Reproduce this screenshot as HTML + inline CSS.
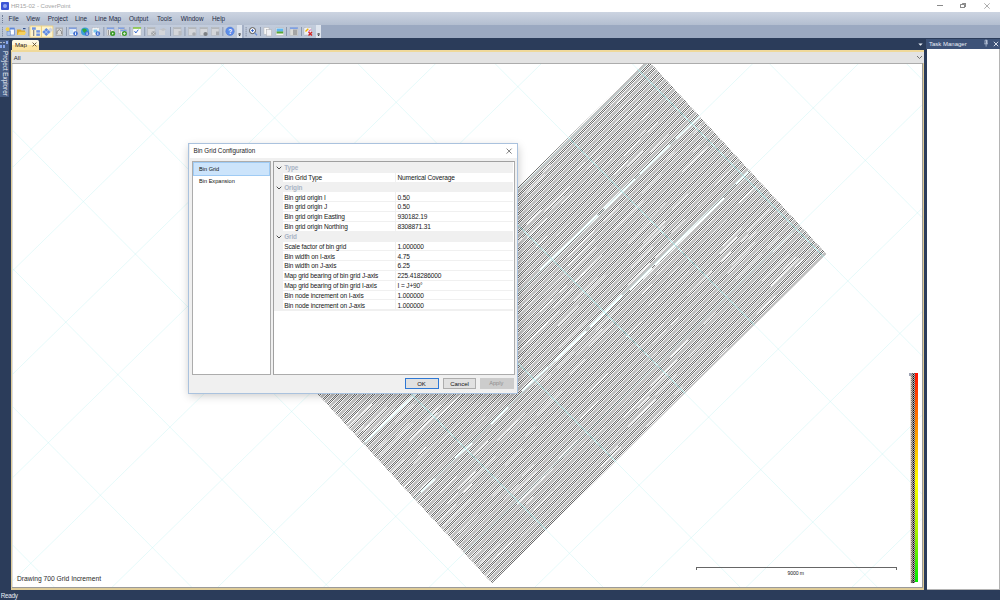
<!DOCTYPE html>
<html><head><meta charset="utf-8">
<style>
*{margin:0;padding:0;box-sizing:border-box}
html,body{width:1000px;height:600px;overflow:hidden;background:#2b3c5a;font-family:"Liberation Sans",sans-serif;position:relative}
.a{position:absolute}
.t{position:absolute;white-space:nowrap;line-height:1}
.tk{-webkit-text-stroke:0.15px currentColor}
</style></head><body>
<div class="a" style="left:0;top:0;width:1000px;height:12px;background:#fff"></div>
<div class="a" style="left:1px;top:2px;width:7.5px;height:7.5px;background:#3c55d6;border-radius:1px"></div>
<div class="a" style="left:2.5px;top:3.5px;width:4.5px;height:4.5px;background:#97a8ee;border-radius:50%"></div>
<div class="t" style="left:11px;top:2.6px;font-size:6.05px;color:#a4a4a4;">HR15-02 - CoverPoint</div>
<div class="a" style="left:937px;top:5px;width:5.5px;height:0.7px;background:#8a8a8a"></div>
<div class="a" style="left:960.3px;top:4px;width:4.6px;height:4.4px;border:0.7px solid #8a8a8a;border-radius:0.6px"></div>
<div class="a" style="left:961.6px;top:2.9px;width:4.6px;height:4.4px;border-top:0.7px solid #8a8a8a;border-right:0.7px solid #8a8a8a;border-radius:0.6px"></div>
<svg class="a" style="left:983px;top:2px" width="8" height="8"><path d="M1.3 1.3L6.7 6.7M6.7 1.3L1.3 6.7" stroke="#8a8a8a" stroke-width="0.7"/></svg>
<div class="a" style="left:0;top:12px;width:1000px;height:13px;background:linear-gradient(#ccd4e1,#b3bed0)"></div>
<div class="a" style="left:2px;top:15px;width:1px;height:8px;border-left:1px dotted #6f7c95"></div>
<div class="t" style="left:8.6px;top:15.6px;font-size:6.4px;color:#1f2b45;width:9.4px">File</div>
<div class="t" style="left:26.2px;top:15.6px;font-size:6.4px;color:#1f2b45;width:12.8px">View</div>
<div class="t" style="left:47.8px;top:15.6px;font-size:6.4px;color:#1f2b45;width:18.8px">Project</div>
<div class="t" style="left:75px;top:15.6px;font-size:6.4px;color:#1f2b45;width:11.7px">Line</div>
<div class="t" style="left:94.8px;top:15.6px;font-size:6.4px;color:#1f2b45;width:25.4px">Line Map</div>
<div class="t" style="left:129px;top:15.6px;font-size:6.4px;color:#1f2b45;width:19.7px">Output</div>
<div class="t" style="left:157px;top:15.6px;font-size:6.4px;color:#1f2b45;width:14.2px">Tools</div>
<div class="t" style="left:180.8px;top:15.6px;font-size:6.4px;color:#1f2b45;width:22.6px">Window</div>
<div class="t" style="left:212px;top:15.6px;font-size:6.4px;color:#1f2b45;width:12.6px">Help</div>
<div class="a" style="left:0;top:25px;width:1000px;height:13px;background:#9ba9c1"></div>
<div class="a" style="left:0;top:25px;width:242px;height:13px;background:linear-gradient(#c2ccdc,#b9c4d6)"></div>
<div class="a" style="left:237px;top:25px;width:5px;height:13px;background:#e3e8f0"></div>
<div class="a" style="left:244px;top:25px;width:77px;height:13px;background:linear-gradient(#c2ccdc,#b9c4d6)"></div>
<div class="a" style="left:316px;top:25px;width:5px;height:13px;background:#e3e8f0"></div>
<svg class="a" style="left:0;top:0" width="330" height="40" viewBox="0 0 330 40"><rect x="2" y="27.3" width="1" height="1" fill="#6f7c94" /><rect x="2" y="29.3" width="1" height="1" fill="#6f7c94" /><rect x="2" y="31.3" width="1" height="1" fill="#6f7c94" /><rect x="2" y="33.3" width="1" height="1" fill="#6f7c94" /><rect x="2" y="35.3" width="1" height="1" fill="#6f7c94" /><circle cx="7.6" cy="29.2" r="1.9" fill="#f2cd4a" /><rect x="10" y="28" width="4.3" height="7" fill="#fdfdff" stroke="#5b7fcf" stroke-width="0.7"/><rect x="10" y="28" width="4.3" height="1.5" fill="#5b86dc" /><rect x="7" y="31.3" width="3.2" height="4" fill="#a8c3f0" stroke="#6d87b8" stroke-width="0.5"/><path d="M17 29.5L20.5 29.5L21.5 30.5L25 30.5L25 35L17 35Z" fill="#d9a52e" stroke="none" stroke-width="1" /><path d="M17.5 35L19 31.8L26.3 31.8L24.8 35Z" fill="#f6d060" stroke="none" stroke-width="1" /><rect x="23" y="28" width="2.5" height="1.2" fill="#2f4f8a" /><rect x="28.4" y="27" width="0.9" height="9" fill="#8793a9" /><rect x="30" y="26" width="11.3" height="11.2" fill="#fdf3cc" stroke="#eccc78" stroke-width="0.8"/><rect x="41.6" y="26" width="11.3" height="11.2" fill="#fdf3cc" stroke="#eccc78" stroke-width="0.8"/><rect x="32" y="27.3" width="3.8" height="2.5" fill="#6e94e4" /><rect x="36.3" y="30.2" width="3.6" height="2.4" fill="#6e94e4" /><rect x="36.3" y="33.5" width="3.6" height="2.4" fill="#6e94e4" /><rect x="33" y="30" width="1.3" height="6" fill="#8c8c8c" /><path d="M50.5 27.5L53 30L49 34L46.5 31.5Z" fill="#d0d4dc" stroke="none" stroke-width="1" /><path d="M46.3 28L50.3 32L46.3 36L42.3 32Z" fill="#5f8ae0" stroke="none" stroke-width="1" /><path d="M44.3 30L48.3 34M48.3 30L44.3 34" fill="none" stroke="#dfe9fb" stroke-width="0.6" /><rect x="55.5" y="27.5" width="7.5" height="8.5" fill="#a9abae" /><rect x="56.8" y="28.8" width="5" height="6" fill="#dcdcdc" /><path d="M57 34L57 31.5L59.3 29.5L61.6 31.5L61.6 34" fill="none" stroke="#8a8a8a" stroke-width="1" /><rect x="66" y="27" width="0.9" height="9" fill="#8793a9" /><rect x="69" y="27.5" width="7.5" height="8" fill="#f4f7fc" stroke="#8e98a8" stroke-width="0.6"/><rect x="69" y="27.5" width="7.5" height="1.7" fill="#7f9ee0" /><rect x="70" y="30" width="3" height="4" fill="#c9e2f8" /><circle cx="75.5" cy="33.6" r="2.3" fill="#3f6fd1" /><rect x="75.1" y="32.4" width="0.9" height="2.6" fill="#fff" /><circle cx="85" cy="31.5" r="4" fill="#3aa0d8" /><path d="M82 29.5Q84 28 86 29L87 31L85 33L83.5 32Z" fill="#31a83b" stroke="none" stroke-width="1" /><circle cx="87" cy="33.6" r="2.3" fill="#3f6fd1" /><rect x="86.6" y="32.4" width="0.9" height="2.6" fill="#fff" /><rect x="92.2" y="27.8" width="7" height="7.5" fill="#fafafa" stroke="#a0a0a0" stroke-width="0.5" stroke-dasharray="1 0.6"/><rect x="93.5" y="29.5" width="3.8" height="3" fill="#7cc8ea" /><circle cx="97.8" cy="33.6" r="2.3" fill="#3f6fd1" /><rect x="97.39999999999999" y="32.4" width="0.9" height="2.6" fill="#fff" /><rect x="103.4" y="27" width="0.9" height="9" fill="#8793a9" /><rect x="107" y="27.5" width="7" height="8" fill="#e6e6e6" stroke="#a2a2a2" stroke-width="0.5"/><rect x="107" y="27.5" width="7" height="1.8" fill="#7da0e6" /><rect x="108" y="30" width="1" height="5" fill="#9a9a9a" /><rect x="110" y="30" width="1" height="5" fill="#9a9a9a" /><circle cx="112.7" cy="33.6" r="2.5" fill="#3c9b2a" /><path d="M112 32.4L113.8 33.6L112 34.8Z" fill="#e8f6e0" stroke="none" stroke-width="1" /><rect x="118.3" y="27.5" width="6" height="6" fill="#e8e8e8" stroke="#a2a2a2" stroke-width="0.5"/><rect x="118.3" y="27.5" width="6" height="1.6" fill="#7da0e6" /><rect x="120.5" y="29.8" width="6" height="6" fill="#eeeeee" stroke="#a2a2a2" stroke-width="0.5"/><rect x="120.5" y="29.8" width="6" height="1.6" fill="#7da0e6" /><circle cx="124.4" cy="33.6" r="2.5" fill="#3c9b2a" /><path d="M123 33.6L125.8 33.6M124.4 32.2L124.4 35" fill="none" stroke="#eaf6e4" stroke-width="0.8" /><rect x="129.4" y="27" width="0.9" height="9" fill="#8793a9" /><rect x="133" y="27.5" width="8" height="8" fill="#fbfbfb" stroke="#b8b8b8" stroke-width="0.5"/><rect x="133" y="27.2" width="8" height="1.6" fill="#86c440" /><path d="M134.5 31L135.8 33L138.3 29.7" fill="none" stroke="#3b6fd0" stroke-width="1" /><rect x="144.3" y="27" width="0.9" height="9" fill="#8793a9" /><rect x="147.5" y="27.5" width="7.5" height="7.8" fill="#d4d6da" stroke="#b0b3b8" stroke-width="0.5"/><rect x="147.5" y="27.5" width="7.5" height="1.5" fill="#b4b7bc" /><circle cx="153.5" cy="33.5" r="2.3" fill="#9fa2a6" /><path d="M152.3 32.3L154.7 34.7M154.7 32.3L152.3 34.7" fill="none" stroke="#e2e2e2" stroke-width="0.6" /><rect x="159" y="30" width="6" height="5" fill="#d3d5d9" /><path d="M160 29.5L163.5 28L166.5 29.5L163 31Z" fill="#bfc2c6" stroke="none" stroke-width="1" /><rect x="170" y="27" width="0.9" height="9" fill="#8793a9" /><rect x="173.5" y="27.5" width="7.5" height="7.8" fill="#d4d6da" stroke="#b0b3b8" stroke-width="0.5"/><rect x="173.5" y="27.5" width="7.5" height="1.5" fill="#b4b7bc" /><rect x="178.5" y="31" width="3" height="4" fill="#b8babe" /><rect x="184.5" y="27" width="0.9" height="9" fill="#8793a9" /><rect x="188.5" y="27.5" width="7.5" height="7.8" fill="#d4d6da" stroke="#b0b3b8" stroke-width="0.5"/><rect x="188.5" y="27.5" width="7.5" height="1.5" fill="#b4b7bc" /><circle cx="194" cy="34" r="1.8" fill="#a8abb0" /><rect x="200" y="27.5" width="7.5" height="7.8" fill="#d4d6da" stroke="#b0b3b8" stroke-width="0.5"/><rect x="200" y="27.5" width="7.5" height="1.5" fill="#b4b7bc" /><circle cx="205.5" cy="34" r="2.1" fill="#7d8084" /><rect x="211.5" y="27.5" width="7.5" height="7.8" fill="#d4d6da" stroke="#b0b3b8" stroke-width="0.5"/><rect x="211.5" y="27.5" width="7.5" height="1.5" fill="#b4b7bc" /><rect x="216" y="31.5" width="3" height="3.5" fill="#a8abb0" /><rect x="222.4" y="27" width="0.9" height="9" fill="#8793a9" /><circle cx="230" cy="31.3" r="4.2" fill="#5d8ce8" stroke="#4a77d0" stroke-width="0.5"/><text x="228.2" y="34" font-size="6.5" font-weight="bold" fill="#fff" font-family="Liberation Sans">?</text><rect x="237" y="25" width="5" height="12.8" fill="#dfe5ee" /><rect x="238.5" y="33.2" width="2.2" height="0.6" fill="#222" /><path d="M238.2 34.5L241 34.5L239.6 36Z" fill="#111" stroke="none" stroke-width="1" /><rect x="242" y="25" width="2" height="12.8" fill="#a4b0c6" /><rect x="245.6" y="27.3" width="1" height="1" fill="#6f7c94" /><rect x="245.6" y="29.3" width="1" height="1" fill="#6f7c94" /><rect x="245.6" y="31.3" width="1" height="1" fill="#6f7c94" /><rect x="245.6" y="33.3" width="1" height="1" fill="#6f7c94" /><rect x="245.6" y="35.3" width="1" height="1" fill="#6f7c94" /><circle cx="252.5" cy="30.6" r="3" fill="#fff" stroke="#505050" stroke-width="1"/><path d="M251 30.6L254 30.6M252.5 29.1L252.5 32.1" fill="none" stroke="#2c5cc8" stroke-width="0.9" /><path d="M254.6 32.8L257 35.2" fill="none" stroke="#6b8fd8" stroke-width="1.3" /><rect x="260" y="27" width="0.9" height="9" fill="#8793a9" /><rect x="264" y="27.7" width="5" height="6.5" fill="#f8f8f8" stroke="#b8b8b8" stroke-width="0.5"/><rect x="266.3" y="29.5" width="5.4" height="6.5" fill="#f0f0f4" stroke="#a8a8a8" stroke-width="0.5"/><rect x="276" y="27.8" width="7.8" height="7.5" fill="#f4f4f4" stroke="#b5b5b5" stroke-width="0.5"/><rect x="276.6" y="28.5" width="6.6" height="3.2" fill="#5cb4ef" /><rect x="276.6" y="31.5" width="6.6" height="2" fill="#58a632" /><rect x="286" y="27" width="0.9" height="9" fill="#8793a9" /><rect x="290" y="27.5" width="7.8" height="8" fill="#dcdcd8" stroke="#b5b5b5" stroke-width="0.5"/><rect x="290" y="27.3" width="7.8" height="1.8" fill="#7da0e6" /><rect x="293" y="29.5" width="4" height="5.5" fill="#a5a5a5" /><rect x="301" y="27" width="0.9" height="9" fill="#8793a9" /><rect x="304" y="27.5" width="7.5" height="7.5" fill="#eef0f4" stroke="#8a8a8a" stroke-width="0.4" stroke-dasharray="0.8 0.5"/><path d="M305 31L307.8 28.2L308.8 29.2L306 32Z" fill="#f0b400" stroke="none" stroke-width="1" /><path d="M308.3 31.3L310.3 29.3L311 30L309 32Z" fill="#e050c0" stroke="none" stroke-width="1" /><path d="M308.5 32L312 35.5M312 32L308.5 35.5" fill="none" stroke="#d42020" stroke-width="1.3" /><rect x="316" y="25" width="5" height="12.8" fill="#dfe5ee" /><rect x="317.5" y="33.2" width="2.2" height="0.6" fill="#222" /><path d="M317.2 34.5L320 34.5L318.6 36Z" fill="#111" stroke="none" stroke-width="1" /></svg>
<div class="a" style="left:0;top:39.5px;width:8.5px;height:57px;background:#455b83"></div>
<div class="t" style="left:1.2px;top:50.5px;font-size:6.3px;color:#f2f5fa;transform-origin:0 0;transform:translateX(6.6px) rotate(90deg)">Project Explorer</div>
<div class="a" style="left:0.3px;top:41.5px;width:2px;height:1.6px;background:#aeb4bf"></div><div class="a" style="left:2.8px;top:41.5px;width:2px;height:1.6px;background:#aeb4bf"></div><div class="a" style="left:6px;top:40.6px;width:1.8px;height:3.6px;background:#86a6ee"></div>
<div class="a" style="left:0.3px;top:45px;width:2px;height:2.6px;background:#86a6ee"></div><div class="a" style="left:3px;top:45px;width:2px;height:2.6px;background:#86a6ee"></div>
<div class="a" style="left:11.5px;top:39.5px;width:27.5px;height:11px;background:linear-gradient(#fffbe9 0%,#fff6d8 45%,#fde6a4 50%,#fde4a0 100%);border-radius:1.5px 1.5px 0 0"></div>
<div class="t" style="left:14.9px;top:41.9px;font-size:6.2px;color:#2b2222;">Map</div>
<svg class="a" style="left:31.5px;top:42px" width="5" height="5"><path d="M0.6 0.6L4.4 4.4M4.4 0.6L0.6 4.4" stroke="#5c4e34" stroke-width="0.9"/></svg>
<div class="a" style="left:11px;top:50px;width:913px;height:540px;background:#dfcc98"></div>
<div class="a" style="left:11px;top:50px;width:913px;height:2px;background:#efd99b"></div>
<div class="a" style="left:12px;top:52px;width:911.5px;height:11px;background:#e3e3e3"></div>
<div class="t" style="left:13.8px;top:55.2px;font-size:6.0px;color:#1b1b1b;">All</div>
<svg class="a" style="left:915.5px;top:55.2px" width="7" height="5"><path d="M1 1L3.5 3.5L6 1" fill="none" stroke="#555" stroke-width="0.8"/></svg>
<div class="a" style="left:12px;top:63px;width:911px;height:1px;background:#acacac"></div>
<div class="a" style="left:12px;top:64px;width:910px;height:523px;background:#fff;border-left:1px solid #dedede"></div>
<div class="a" style="left:922px;top:63px;width:1px;height:525px;background:#9a9a9a"></div>
<div class="a" style="left:12px;top:587px;width:911px;height:1px;background:#9a9a9a"></div>
<svg class="a" style="left:917.8px;top:42.8px" width="6" height="4"><path d="M0.3 0.4L4.7 0.4L2.5 2.8Z" fill="#e8edf5"/></svg>
<svg class="a" style="left:0;top:0" width="1000" height="600" viewBox="0 0 1000 600">
<defs><clipPath id="mc"><rect x="12" y="64" width="910" height="523"/></clipPath>
<clipPath id="hc"><polygon points="647.5,59.5 826.7,254.0 492.0,583.5 312.8,389.0"/></clipPath>
<pattern id="ck" width="9" height="9" patternUnits="userSpaceOnUse"><rect width="9" height="9" fill="#c0c0c0"/><rect x="0" y="0" width="1" height="1" fill="#ffffff"/><rect x="0" y="1" width="1" height="1" fill="#6e6e6e"/><rect x="0" y="2" width="1" height="1" fill="#f0f0f0"/><rect x="0" y="3" width="1" height="1" fill="#6e6e6e"/><rect x="0" y="4" width="1" height="1" fill="#ffffff"/><rect x="1" y="0" width="1" height="1" fill="#6e6e6e"/><rect x="1" y="1" width="1" height="1" fill="#f0f0f0"/><rect x="1" y="2" width="1" height="1" fill="#6e6e6e"/><rect x="1" y="3" width="1" height="1" fill="#ffffff"/><rect x="1" y="8" width="1" height="1" fill="#ffffff"/><rect x="2" y="0" width="1" height="1" fill="#f0f0f0"/><rect x="2" y="1" width="1" height="1" fill="#6e6e6e"/><rect x="2" y="2" width="1" height="1" fill="#ffffff"/><rect x="2" y="7" width="1" height="1" fill="#ffffff"/><rect x="2" y="8" width="1" height="1" fill="#6e6e6e"/><rect x="3" y="0" width="1" height="1" fill="#6e6e6e"/><rect x="3" y="1" width="1" height="1" fill="#ffffff"/><rect x="3" y="6" width="1" height="1" fill="#ffffff"/><rect x="3" y="7" width="1" height="1" fill="#6e6e6e"/><rect x="3" y="8" width="1" height="1" fill="#f0f0f0"/><rect x="4" y="0" width="1" height="1" fill="#ffffff"/><rect x="4" y="5" width="1" height="1" fill="#ffffff"/><rect x="4" y="6" width="1" height="1" fill="#6e6e6e"/><rect x="4" y="7" width="1" height="1" fill="#f0f0f0"/><rect x="4" y="8" width="1" height="1" fill="#6e6e6e"/><rect x="5" y="4" width="1" height="1" fill="#ffffff"/><rect x="5" y="5" width="1" height="1" fill="#6e6e6e"/><rect x="5" y="6" width="1" height="1" fill="#f0f0f0"/><rect x="5" y="7" width="1" height="1" fill="#6e6e6e"/><rect x="5" y="8" width="1" height="1" fill="#ffffff"/><rect x="6" y="3" width="1" height="1" fill="#ffffff"/><rect x="6" y="4" width="1" height="1" fill="#6e6e6e"/><rect x="6" y="5" width="1" height="1" fill="#f0f0f0"/><rect x="6" y="6" width="1" height="1" fill="#6e6e6e"/><rect x="6" y="7" width="1" height="1" fill="#ffffff"/><rect x="7" y="2" width="1" height="1" fill="#ffffff"/><rect x="7" y="3" width="1" height="1" fill="#6e6e6e"/><rect x="7" y="4" width="1" height="1" fill="#f0f0f0"/><rect x="7" y="5" width="1" height="1" fill="#6e6e6e"/><rect x="7" y="6" width="1" height="1" fill="#ffffff"/><rect x="8" y="1" width="1" height="1" fill="#ffffff"/><rect x="8" y="2" width="1" height="1" fill="#6e6e6e"/><rect x="8" y="3" width="1" height="1" fill="#f0f0f0"/><rect x="8" y="4" width="1" height="1" fill="#6e6e6e"/><rect x="8" y="5" width="1" height="1" fill="#ffffff"/></pattern></defs>
<g clip-path="url(#mc)">
<g clip-path="url(#hc)">
<polygon points="647.5,59.5 826.7,254.0 492.0,583.5 312.8,389.0" fill="url(#ck)"/>
<path d="M365 442L413 396M410 399L517 290M540 270L598 215M604 209L635 179M640 174L670 145M676 139L702 114M421 492L435 479M455 458L472 443M491 424L508 407M522 391L548 367M555 361L586 331M590 327L622 295M630 290L652 268M655 265L724 198M736 184L748 172" stroke="#f8ffff" stroke-width="2.3" fill="none"/>
<path d="M359.9 347.2L334.7 372.0M388.2 319.3L372.2 335.1M363.5 343.6L353.5 353.5M380.6 326.8L364.1 343.1M386.5 325.6L378.7 333.3M550.4 164.3L542.6 171.9M380.9 331.1L359.4 352.3M637.9 78.1L609.8 105.8M329.0 382.2L317.2 393.8M436.6 280.9L416.6 300.5M375.8 340.7L368.6 347.8M642.2 78.5L616.4 103.8M453.4 264.3L430.0 287.4M544.9 174.2L525.7 193.1M482.6 240.2L462.3 260.1M489.1 233.8L468.3 254.3M439.4 287.3L424.4 302.0M474.1 253.1L447.1 279.7M630.7 98.9L619.2 110.2M404.9 321.3L387.5 338.4M637.3 97.0L614.1 119.9M626.9 111.8L614.6 124.0M640.6 98.3L634.5 104.3M433.8 302.0L423.2 312.4M352.7 381.8L345.8 388.6M337.1 401.7L330.5 408.2M640.8 102.8L620.7 122.5M404.6 335.2L392.8 346.9M636.0 107.4L622.7 120.5M413.7 330.9L405.3 339.1M584.9 162.3L576.9 170.2M647.4 100.8L623.5 124.4M607.9 139.7L589.5 157.8M499.3 251.2L471.1 278.9M412.1 337.1L396.8 352.1M541.2 210.0L526.5 224.4M338.3 409.7L334.9 413.0M570.0 186.1L544.2 211.6M601.3 155.3L586.6 169.8M385.9 367.4L365.5 387.5M638.3 119.0L610.0 146.8M600.5 156.2L588.9 167.6M563.9 196.7L551.5 209.0M649.5 112.5L641.7 120.1M479.0 280.3L467.8 291.4M472.8 286.4L458.6 300.4M522.4 237.6L494.8 264.8M397.7 365.0L388.9 373.6M547.0 217.9L527.0 237.6M572.2 193.1L561.3 203.9M471.9 291.9L449.7 313.8M431.0 336.8L403.8 363.5M612.7 157.9L585.3 184.8M478.7 294.4L463.4 309.5M645.9 129.7L639.3 136.2M358.5 412.7L347.3 423.7M444.9 327.7L433.3 339.1M518.6 259.7L501.0 277.0M371.9 404.1L348.2 427.4M640.6 139.6L624.0 155.9M464.2 313.3L444.4 332.7M658.1 122.3L647.5 132.7M434.4 347.1L427.1 354.3M547.4 235.9L536.0 247.1M628.3 160.8L614.2 174.7M363.8 425.7L356.0 433.4M643.2 150.7L627.2 166.5M578.8 214.2L556.3 236.2M514.8 277.1L487.5 304.0M492.1 299.5L465.3 325.8M387.1 407.4L365.4 428.8M369.5 424.8L363.3 430.8M478.8 317.1L462.1 333.6M447.2 348.2L434.3 361.0M668.8 134.7L650.6 152.6M394.9 408.9L372.4 431.1M432.9 376.1L406.3 402.3M580.6 230.7L559.3 251.7M409.0 404.2L393.8 419.1M413.8 404.0L395.0 422.5M483.4 340.1L469.0 354.3M700.9 126.0L693.5 133.3M674.7 151.8L666.3 160.0M618.9 206.7L603.7 221.6M594.5 230.7L567.5 257.3M554.0 275.2L537.8 291.2M526.1 302.7L508.5 319.9M535.0 293.9L522.2 306.4M677.9 153.2L671.7 159.4M386.8 439.8L378.5 447.9M488.5 344.2L471.7 360.8M409.4 422.1L395.3 436.0M661.5 173.9L641.9 193.3M535.9 297.5L513.0 320.1M594.8 239.6L567.9 266.1M413.2 423.0L400.0 435.9M488.8 348.5L478.6 358.6M567.4 271.1L543.4 294.8M405.7 430.4L379.9 455.7M640.4 203.9L613.7 230.2M643.6 200.7L634.9 209.3M596.5 247.1L570.4 272.8M700.3 144.9L693.1 152.0M441.0 404.7L432.7 412.9M558.3 289.2L531.5 315.6M438.0 407.7L423.6 421.9M553.0 299.1L540.1 311.8M437.4 412.8L409.3 440.5M566.9 285.4L559.4 292.7M707.8 146.7L682.2 171.9M704.4 150.0L682.5 171.5M602.0 255.5L581.4 275.6M531.7 324.6L511.4 344.6M584.9 272.3L574.9 282.1M463.1 392.2L451.3 403.8M459.7 395.5L435.8 419.0M573.3 288.3L553.2 308.0M404.1 459.4L390.2 473.0M658.2 209.2L641.7 225.5M665.1 202.4L659.2 208.3M548.1 322.2L541.6 328.6M651.3 220.6L627.9 243.7M546.5 323.8L519.2 350.6M559.7 310.8L531.2 338.8M597.6 278.0L573.9 301.4M426.0 447.0L418.3 454.5M688.1 193.6L672.0 209.3M522.2 356.9L495.7 382.9M605.5 274.9L586.8 293.3M437.3 440.5L413.4 464.0M578.6 305.9L558.0 326.2M665.2 220.7L643.0 242.5M459.9 422.8L439.5 442.8M664.6 225.8L638.4 251.6M411.1 480.0L403.5 487.5M652.8 246.6L630.7 268.4M735.2 165.5L718.0 182.5M728.0 172.6L714.5 185.9M485.5 415.9L468.7 432.4M733.1 172.1L709.0 195.9M721.2 183.9L697.3 207.4M684.8 219.7L671.4 232.9M587.3 320.2L558.8 348.3M443.4 461.9L425.9 479.1M430.5 479.2L413.6 495.8M429.4 480.3L421.7 487.8M672.9 240.5L655.2 257.9M649.9 263.2L627.6 285.1M574.3 342.2L549.4 366.8M561.8 354.5L549.0 367.1M431.9 487.0L416.8 501.9M547.5 373.2L534.9 385.6M704.2 218.9L686.1 236.7M660.1 262.3L643.1 279.1M574.3 351.3L557.2 368.2M551.1 374.2L544.8 380.4M429.2 494.2L419.0 504.3M619.6 306.8L595.6 330.3M715.1 217.3L707.3 225.0M700.1 232.1L673.2 258.6M602.3 328.4L575.6 354.7M488.0 440.9L473.1 455.6M673.5 258.3L656.5 275.0M613.0 322.5L588.7 346.4M456.7 476.3L440.1 492.6M651.9 284.1L641.9 294.0M750.5 191.7L738.8 203.1M525.3 413.3L497.3 440.9M748.4 193.7L739.2 202.8M756.4 185.9L744.2 197.9M518.1 420.4L506.9 431.5M727.4 218.9L705.1 240.9M721.4 224.8L704.1 241.9M678.7 266.9L668.5 277.0M585.0 359.1L569.4 374.5M552.9 395.3L528.4 419.5M558.6 389.7L540.7 407.4M475.6 471.4L457.7 489.0M691.7 258.7L681.0 269.2M562.2 390.7L537.0 415.6M689.1 265.8L666.5 288.1M495.7 456.2L469.4 482.1M661.2 293.2L648.4 305.9M458.1 493.2L447.4 503.7M472.1 484.0L463.4 492.6M689.1 270.4L666.8 292.4M641.6 321.8L625.9 337.2M456.4 504.1L438.3 521.9M535.5 426.2L525.2 436.3M741.5 228.0L722.8 246.4M470.8 499.1L443.0 526.4M737.2 236.8L720.0 253.8M522.1 448.6L504.9 465.5M509.3 465.7L492.6 482.1M769.9 209.2L746.8 231.9M607.9 373.2L589.3 391.6M731.2 251.9L721.3 261.6M712.0 270.8L687.1 295.2M448.8 529.9L445.5 533.1M748.4 235.0L741.2 242.0M756.5 231.5L748.6 239.3M651.6 334.8L636.2 350.0M663.8 322.8L653.3 333.1M657.6 328.9L637.4 348.8M502.1 486.6L492.3 496.2M666.5 329.3L652.4 343.2M478.3 514.5L458.8 533.7M755.1 242.0L731.4 265.4M678.5 317.4L670.9 325.0M598.4 400.9L588.4 410.8M593.4 405.8L579.9 419.1M533.9 464.4L521.8 476.3M750.2 251.5L727.5 273.8M518.6 484.0L503.7 498.7M491.2 511.0L465.5 536.4M536.7 470.8L513.6 493.6M657.7 351.7L635.5 373.5M769.9 241.2L756.4 254.5M762.0 253.6L736.0 279.2M464.2 546.8L461.0 549.9M779.1 236.7L767.2 248.5M473.9 537.2L461.4 549.5M577.1 440.2L558.4 458.6M619.5 398.4L604.9 412.8M585.2 436.8L563.5 458.2M545.2 476.2L517.1 503.8M792.5 232.7L772.8 252.1M552.9 468.6L541.3 480.0M633.4 393.9L610.4 416.6M585.5 441.1L579.5 447.0M715.8 312.8L703.8 324.6M688.3 339.9L670.3 357.6M480.9 548.7L469.9 559.5M471.5 557.9L469.9 559.5M533.6 496.7L526.2 504.1M604.6 426.9L581.6 449.5M677.5 359.7L650.3 386.4M651.1 390.2L641.5 399.6M643.2 398.1L623.5 417.4M789.4 254.1L762.1 280.9M668.2 373.4L650.5 390.8M706.7 340.1L688.9 357.6M649.5 396.4L637.6 408.1M500.1 543.5L479.3 564.0M560.9 483.6L554.6 489.8M552.7 491.7L533.6 510.5M676.6 374.3L655.3 395.3M795.8 257.0L782.9 269.7M798.9 258.5L770.6 286.3M499.5 553.2L492.2 560.5M512.6 540.4L497.1 555.6M655.8 399.4L627.9 426.8M802.6 259.4L794.7 267.2M546.7 511.3L520.2 537.4M492.5 569.3L485.4 576.3M618.0 445.7L609.7 453.9M682.7 386.7L674.3 394.9M534.1 532.9L520.2 546.6M770.5 300.2L756.5 313.9M775.5 295.3L760.3 310.2M621.1 447.2L600.8 467.2M702.7 371.5L680.0 393.9M551.7 520.2L542.8 528.9M727.4 347.2L718.7 355.7M663.5 410.1L646.3 427.0" stroke="#ffffff" stroke-width="1.0" fill="none" opacity="0.9"/>
</g>
<path d="M-133.5 0L-746.6 600M-27.8 0L-640.9 600M77.9 0L-535.2 600M183.6 0L-429.5 600M289.3 0L-323.8 600M395.0 0L-218.1 600M500.7 0L-112.4 600M606.4 0L-6.7 600M712.1 0L99.0 600M817.8 0L204.7 600M923.5 0L310.4 600M1029.2 0L416.1 600M1134.9 0L521.8 600M1240.6 0L627.5 600M1346.3 0L733.2 600M1452.0 0L838.9 600M1557.7 0L944.6 600M1663.4 0L1050.3 600M1769.1 0L1156.0 600M-802.5 0L-207.1 600M-665.3 0L-69.9 600M-528.2 0L67.2 600M-391.0 0L204.4 600M-253.9 0L341.5 600M-116.7 0L478.7 600M20.4 0L615.8 600M157.6 0L753.0 600M294.7 0L890.1 600M431.9 0L1027.3 600M569.0 0L1164.4 600M706.2 0L1301.6 600M843.3 0L1438.7 600M980.5 0L1575.9 600" stroke="#bcf3f3" stroke-width="0.7" fill="none" opacity="0.55"/>
<g clip-path="url(#hc)"><path d="M-802.5 0L-207.1 600M-665.3 0L-69.9 600M-528.2 0L67.2 600M-391.0 0L204.4 600M-253.9 0L341.5 600M-116.7 0L478.7 600M20.4 0L615.8 600M157.6 0L753.0 600M294.7 0L890.1 600M431.9 0L1027.3 600M569.0 0L1164.4 600M706.2 0L1301.6 600M843.3 0L1438.7 600M980.5 0L1575.9 600" stroke="#a8e8e8" stroke-width="0.9" fill="none" opacity="0.85"/></g>
</g></svg>
<div class="t" style="left:17px;top:576.2px;font-size:6.72px;color:#2a2a2a;">Drawing 700 Grid Increment</div>
<div class="a" style="left:695.5px;top:567px;width:201px;height:1px;background:#666"></div>
<div class="a" style="left:695.5px;top:567px;width:1px;height:3px;background:#666"></div>
<div class="a" style="left:895.5px;top:567px;width:1px;height:3px;background:#666"></div>
<div class="t" style="left:787.5px;top:570.9px;font-size:5.1px;color:#1a1a1a;letter-spacing:-0.1px">9000 m</div>
<div class="a" style="left:915.3px;top:373px;width:2.3px;height:209px;background:linear-gradient(#ff1000 0%,#ff7a00 22%,#ffd000 40%,#ffff00 52%,#b0f000 75%,#00e800 100%)"></div>
<svg class="a" style="left:909px;top:372px" width="7" height="213"><defs><pattern id="lg" width="2" height="2" patternUnits="userSpaceOnUse"><rect width="2" height="2" fill="#b8aca4"/><rect x="0" y="0" width="1" height="1" fill="#080808"/><rect x="1" y="1" width="1" height="1" fill="#5a5a66"/></pattern></defs><rect x="1.5" y="1" width="1" height="210" fill="#e6c8a8"/><rect x="2.5" y="1" width="3.5" height="210" fill="url(#lg)"/><rect x="0" y="1" width="2.5" height="3" fill="#9ea3b4"/><circle cx="3.8" cy="209.5" r="1.2" fill="none" stroke="#333" stroke-width="0.6"/></svg>
<div class="a" style="left:926px;top:38.5px;width:74px;height:10px;background:#3e5378"></div>
<div class="t" style="left:929px;top:41.2px;font-size:6.0px;color:#e9eef6;">Task Manager</div>
<svg class="a" style="left:982px;top:39.3px" width="8" height="9"><path d="M3 1.2L5.2 1.2L5.2 4.6M3 1.2L3 4.6M2.2 4.8L6 4.8M4.1 4.8L4.1 7.6" fill="none" stroke="#c2cde0" stroke-width="0.7"/><rect x="3.9" y="1.2" width="1" height="3.5" fill="#c2cde0"/></svg>
<svg class="a" style="left:993px;top:40.6px" width="6" height="6"><path d="M0.8 0.8L5.2 5.2M5.2 0.8L0.8 5.2" stroke="#e6ecf5" stroke-width="0.9"/></svg>
<div class="a" style="left:927px;top:48.5px;width:73px;height:541px;background:#fff;border-right:1px solid #b4b4b4;border-bottom:1px solid #b4b4b4"></div>
<div class="t" style="left:0.8px;top:592.9px;font-size:6.3px;color:#e8edf5;letter-spacing:-0.3px">Ready</div>
<div class="a" style="left:188.5px;top:143px;width:329px;height:250px;box-shadow:0 2.5px 9px rgba(0,0,0,0.22)"></div>
<div class="a" style="left:188.3px;top:142.5px;width:329.4px;height:251.3px;background:#f0f0f0;border:1px solid #aac2de"></div>
<div class="a" style="left:189.5px;top:143.5px;width:327px;height:14.8px;background:#fff"></div>
<div class="t" style="left:193.5px;top:147.6px;font-size:6.27px;color:#1a1a1a;">Bin Grid Configuration</div>
<svg class="a" style="left:505px;top:146.5px" width="8" height="8"><path d="M1.6 1.6L6.6 6.6M6.6 1.6L1.6 6.6" stroke="#2a2a2a" stroke-width="0.6"/></svg>
<div class="a" style="left:191.5px;top:161px;width:79.5px;height:213.5px;background:#fff;border:1px solid #acacac"></div>
<div class="a" style="left:192.5px;top:162px;width:77.5px;height:14px;background:#cce4fb;border:1px solid #9fcbf4"></div>
<div class="t" style="left:199px;top:166.9px;font-size:5.6px;color:#111;">Bin Grid</div>
<div class="t" style="left:199px;top:179.4px;font-size:5.6px;color:#111;">Bin Expansion</div>
<div class="a" style="left:273px;top:161px;width:241.5px;height:214px;background:#fff;border-top:1px solid #a0a0a0;border-left:1px solid #a0a0a0;border-right:1px solid #acacac;border-bottom:1px solid #acacac"></div>
<div class="a" style="left:274px;top:162px;width:238.5px;height:148.5px;background:#f0f0f0"></div>
<svg class="a" style="left:275.6px;top:165.90px" width="6" height="4"><path d="M0.7 0.7L3 3L5.3 0.7" fill="none" stroke="#3a3a3a" stroke-width="0.9"/></svg>
<div class="t" style="left:284.2px;top:165.3px;font-size:6.4px;color:#a9b4c5;font-weight:bold;letter-spacing:-0.1px">Type</div>
<div class="a" style="left:283px;top:173px;width:112px;height:9px;background:#fff"></div>
<div class="a" style="left:396px;top:173px;width:116.5px;height:9px;background:#fff"></div>
<div class="t" style="left:284.2px;top:175.02px;font-size:6.55px;color:#161616;letter-spacing:-0.13px">Bin Grid Type</div>
<div class="t" style="left:397.5px;top:175.02px;font-size:6.55px;color:#161616;letter-spacing:-0.13px">Numerical Coverage</div>
<svg class="a" style="left:275.6px;top:185.54px" width="6" height="4"><path d="M0.7 0.7L3 3L5.3 0.7" fill="none" stroke="#3a3a3a" stroke-width="0.9"/></svg>
<div class="t" style="left:284.2px;top:184.94px;font-size:6.4px;color:#a9b4c5;font-weight:bold;letter-spacing:-0.1px">Origin</div>
<div class="a" style="left:283px;top:192px;width:112px;height:9px;background:#fff"></div>
<div class="a" style="left:396px;top:192px;width:116.5px;height:9px;background:#fff"></div>
<div class="t" style="left:284.2px;top:194.66px;font-size:6.55px;color:#161616;letter-spacing:-0.13px">Bin grid origin I</div>
<div class="t" style="left:397.5px;top:194.66px;font-size:6.55px;color:#161616;letter-spacing:-0.13px">0.50</div>
<div class="a" style="left:283px;top:202px;width:112px;height:9px;background:#fff"></div>
<div class="a" style="left:396px;top:202px;width:116.5px;height:9px;background:#fff"></div>
<div class="t" style="left:284.2px;top:204.48px;font-size:6.55px;color:#161616;letter-spacing:-0.13px">Bin grid origin J</div>
<div class="t" style="left:397.5px;top:204.48px;font-size:6.55px;color:#161616;letter-spacing:-0.13px">0.50</div>
<div class="a" style="left:283px;top:212px;width:112px;height:9px;background:#fff"></div>
<div class="a" style="left:396px;top:212px;width:116.5px;height:9px;background:#fff"></div>
<div class="t" style="left:284.2px;top:214.3px;font-size:6.55px;color:#161616;letter-spacing:-0.13px">Bin grid origin Easting</div>
<div class="t" style="left:397.5px;top:214.3px;font-size:6.55px;color:#161616;letter-spacing:-0.13px">930182.19</div>
<div class="a" style="left:283px;top:222px;width:112px;height:9px;background:#fff"></div>
<div class="a" style="left:396px;top:222px;width:116.5px;height:9px;background:#fff"></div>
<div class="t" style="left:284.2px;top:224.12px;font-size:6.55px;color:#161616;letter-spacing:-0.13px">Bin grid origin Northing</div>
<div class="t" style="left:397.5px;top:224.12px;font-size:6.55px;color:#161616;letter-spacing:-0.13px">8308871.31</div>
<svg class="a" style="left:275.6px;top:234.64px" width="6" height="4"><path d="M0.7 0.7L3 3L5.3 0.7" fill="none" stroke="#3a3a3a" stroke-width="0.9"/></svg>
<div class="t" style="left:284.2px;top:234.04px;font-size:6.4px;color:#a9b4c5;font-weight:bold;letter-spacing:-0.1px">Grid</div>
<div class="a" style="left:283px;top:242px;width:112px;height:8px;background:#fff"></div>
<div class="a" style="left:396px;top:242px;width:116.5px;height:8px;background:#fff"></div>
<div class="t" style="left:284.2px;top:243.76px;font-size:6.55px;color:#161616;letter-spacing:-0.13px">Scale factor of bin grid</div>
<div class="t" style="left:397.5px;top:243.76px;font-size:6.55px;color:#161616;letter-spacing:-0.13px">1.000000</div>
<div class="a" style="left:283px;top:251px;width:112px;height:9px;background:#fff"></div>
<div class="a" style="left:396px;top:251px;width:116.5px;height:9px;background:#fff"></div>
<div class="t" style="left:284.2px;top:253.58px;font-size:6.55px;color:#161616;letter-spacing:-0.13px">Bin width on I-axis</div>
<div class="t" style="left:397.5px;top:253.58px;font-size:6.55px;color:#161616;letter-spacing:-0.13px">4.75</div>
<div class="a" style="left:283px;top:261px;width:112px;height:9px;background:#fff"></div>
<div class="a" style="left:396px;top:261px;width:116.5px;height:9px;background:#fff"></div>
<div class="t" style="left:284.2px;top:263.4px;font-size:6.55px;color:#161616;letter-spacing:-0.13px">Bin width on J-axis</div>
<div class="t" style="left:397.5px;top:263.4px;font-size:6.55px;color:#161616;letter-spacing:-0.13px">6.25</div>
<div class="a" style="left:283px;top:271px;width:112px;height:9px;background:#fff"></div>
<div class="a" style="left:396px;top:271px;width:116.5px;height:9px;background:#fff"></div>
<div class="t" style="left:284.2px;top:273.22px;font-size:6.55px;color:#161616;letter-spacing:-0.13px">Map grid bearing of bin grid J-axis</div>
<div class="t" style="left:397.5px;top:273.22px;font-size:6.55px;color:#161616;letter-spacing:-0.13px">225.418286000</div>
<div class="a" style="left:283px;top:281px;width:112px;height:9px;background:#fff"></div>
<div class="a" style="left:396px;top:281px;width:116.5px;height:9px;background:#fff"></div>
<div class="t" style="left:284.2px;top:283.04px;font-size:6.55px;color:#161616;letter-spacing:-0.13px">Map grid bearing of bin grid I-axis</div>
<div class="t" style="left:397.5px;top:283.04px;font-size:6.55px;color:#161616;letter-spacing:-0.13px">I = J+90°</div>
<div class="a" style="left:283px;top:291px;width:112px;height:8px;background:#fff"></div>
<div class="a" style="left:396px;top:291px;width:116.5px;height:8px;background:#fff"></div>
<div class="t" style="left:284.2px;top:292.86px;font-size:6.55px;color:#161616;letter-spacing:-0.13px">Bin node increment on I-axis</div>
<div class="t" style="left:397.5px;top:292.86px;font-size:6.55px;color:#161616;letter-spacing:-0.13px">1.000000</div>
<div class="a" style="left:283px;top:300px;width:112px;height:9px;background:#fff"></div>
<div class="a" style="left:396px;top:300px;width:116.5px;height:9px;background:#fff"></div>
<div class="t" style="left:284.2px;top:302.68px;font-size:6.55px;color:#161616;letter-spacing:-0.13px">Bin node increment on J-axis</div>
<div class="t" style="left:397.5px;top:302.68px;font-size:6.55px;color:#161616;letter-spacing:-0.13px">1.000000</div>
<div class="a" style="left:405px;top:378px;width:33.5px;height:11px;background:#e1e1e1;border:1.2px solid #2f78d4"></div>
<div class="t" style="left:417.2px;top:381px;font-size:6.0px;color:#111;">OK</div>
<div class="a" style="left:442.5px;top:378px;width:33.5px;height:11px;background:#e1e1e1;border:1px solid #adadad"></div>
<div class="t" style="left:450.2px;top:381px;font-size:6.0px;color:#111;">Cancel</div>
<div class="a" style="left:480px;top:378.3px;width:34px;height:10.5px;background:#cccccc"></div>
<div class="t" style="left:489.2px;top:381.2px;font-size:5.65px;color:#8d8d8d;">Apply</div>
</body></html>
